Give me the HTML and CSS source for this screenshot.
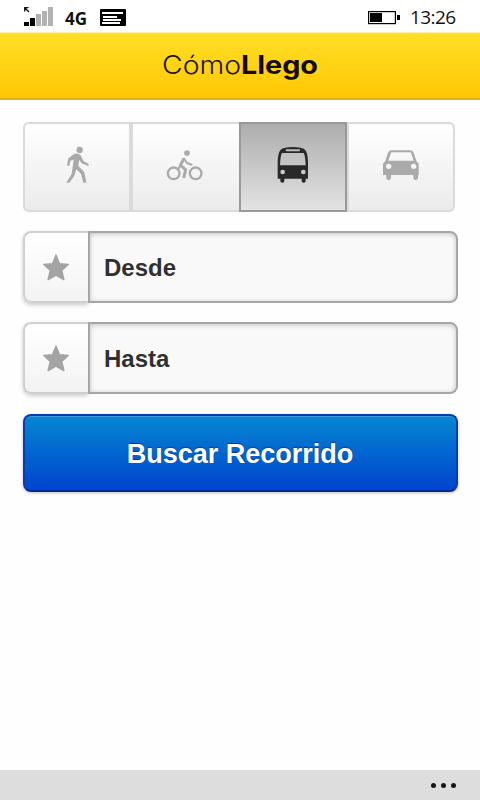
FILE: index.html
```html
<!DOCTYPE html>
<html lang="es">
<head>
<meta charset="utf-8">
<title>CómoLlego</title>
<link rel="stylesheet" href="styles.css">
</head>
<body>
<div class="status">
  <svg class="signal" width="30" height="21" viewBox="0 0 30 21"><path d="M.7 4.500V.7h3.800M1 1l4 4" fill="none" stroke="#111" stroke-width="1.300"/><path d="M0 15h5v4H0zM6 11h5v8H6z" fill="#000"/><path d="M12 7h5v12h-5zM18 4h5v15h-5zM24 0h5v19h-5z" fill="#b2b2b2"/></svg>
  <span class="network">4G</span>
  <svg class="message" width="26" height="18" viewBox="0 0 26 18"><rect width="26" height="17" rx="1" fill="#000"/><path d="M2 3h21v2H2zM3 7h14v2H3zM3 10h18v2H3zM2 13h18v2H2z" fill="#fff"/><path d="M3 9.500h15M3 12.500h17" stroke="#000"/></svg>
  <svg class="battery" width="33" height="14" viewBox="0 0 33 14"><rect x=".6" y=".6" width="26.800" height="12" fill="#fff" stroke="#000" stroke-width="1.200"/><path d="M2 2h12v9H2zM29 4h3v5h-3z"/></svg>
  <span class="clock">13:26</span>
</div>
<header class="header">
  <svg class="logo" width="160" height="36" viewBox="0 0 160 36"><text class="logo-light" x="2" y="26" textLength="79" lengthAdjust="spacingAndGlyphs">Cómo</text><text class="logo-bold" x="81" y="26" textLength="77" lengthAdjust="spacingAndGlyphs">Llego</text></svg>
</header>
<main class="content">
  <nav class="modes">
    <a class="mode"><svg width="108" height="90" viewBox="21 21 324 270"><circle cx="191" cy="105" r="9.500" fill="#a9a9a9"/><path fill="#a9a9a9" d="M175 117Q181 114 188 117Q194 119 196 125L202 138 217 146Q220 150 217 153L197 145 190 134 187 153 202 168Q207 175 211 203H202L195 176 181 163 175 182 160 203H151L167 177 173 134 163 137 160 152H153L157 130Z"/></svg></a>
    <a class="mode"><svg width="108" height="90" viewBox="3 21 324 270"><circle cx="171" cy="114" r="8.500" fill="#aaa"/><g fill="none" stroke="#aaa" stroke-linejoin="round"><circle cx="131" cy="175" r="17.500" stroke-width="7"/><circle cx="197" cy="175" r="17.500" stroke-width="7"/><path d="M162 130L151 151 167 164 161 189" stroke-width="9"/><path d="M161 129L171 144 187 150M150 153L143 165" stroke-width="6"/></g></svg></a>
    <a class="mode active"><svg width="108" height="90" viewBox="21 21 324 270"><path fill="#292929" fill-rule="evenodd" d="M137 191V139Q138 112 146 104Q155 96 182 96Q210 96 219 104Q227 112 228 139V191H221V198Q221 203 215 203T209 198V191H157V198Q157 203 151 203T145 198V191ZM164 103Q161 103 161 106T164 109H201Q204 109 204 106T201 103ZM150 114Q145 122 144 151H221Q220 122 215 114ZM159 171a7 7 0 1 0-14 0a7 7 0 1 0 14 0ZM221 171a7 7 0 1 0-14 0a7 7 0 1 0 14 0Z"/></svg></a>
    <a class="mode"><svg width="108" height="90" viewBox="6 21 324 270"><path fill="#aaa" fill-rule="evenodd" d="M114 180V148Q114 142 120 140L129 113Q132 106 140 106H196Q203 106 206 113L215 140Q221 142 221 148V180H219V188Q219 195 212 195T205 188V180H138V188Q138 195 131 195T124 188V180ZM141 112Q138 112 137 116L130 137H206L199 116Q198 112 194 112ZM139 154a8 8 0 1 0-16 0a8 8 0 1 0 16 0ZM214 154a8 8 0 1 0-16 0a8 8 0 1 0 16 0Z"/></svg></a>
  </nav>
  <div class="field">
    <button class="favorite"><svg width="28" height="29" viewBox="0 0 28 29"><path d="M14 2.200L17.400 10.800 26.200 11.500 19.600 17.300 21.800 26.500 14 22 6.200 26.500 8.400 17.300 1.800 11.500 10.600 10.800Z" fill="#a4a4a4" stroke="#a4a4a4" stroke-width="1.600" stroke-linejoin="round"/></svg></button>
    <div class="input">Desde</div>
  </div>
  <div class="field">
    <button class="favorite"><svg width="28" height="29" viewBox="0 0 28 29"><path d="M14 2.200L17.400 10.800 26.200 11.500 19.600 17.300 21.800 26.500 14 22 6.200 26.500 8.400 17.300 1.800 11.500 10.600 10.800Z" fill="#a4a4a4" stroke="#a4a4a4" stroke-width="1.600" stroke-linejoin="round"/></svg></button>
    <div class="input">Hasta</div>
  </div>
  <button class="search">Buscar Recorrido</button>
</main>
<footer class="appbar"><i></i><i></i><i></i></footer>
</body>
</html>
```
FILE: styles.css
```css
* { box-sizing: border-box; }
body {
  margin: 0;
  height: 800px;
  display: flex;
  flex-direction: column;
  overflow: hidden;
  background: #fefefe;
  font-family: "Liberation Sans", Arial, sans-serif;
}
svg { display: block; flex: none; }
button { padding: 0; font: inherit; }
.status {
  height: 32px;
  display: flex;
  align-items: flex-start;
  padding: 0 24px;
  background: #fff;
  font-family: "Open Sans", "Noto Sans", sans-serif;
  color: #111;
}
.signal { margin-top: 7px; }
.network { width: 34px; margin: 8px 0 0 11px; font-size: 17px; line-height: 22px; font-weight: 700; }
.message { margin: 9px 0 0 1px; }
.battery { margin: 11px 0 0 auto; }
.clock { width: 46px; margin: 5px 0 0 9px; font-size: 19px; line-height: 24px; letter-spacing: -.6px; white-space: nowrap; }
.header {
  height: 68px;
  display: flex;
  justify-content: center;
  padding-top: 15px;
  background: linear-gradient(#ffdf25, #ffc704);
  border-top: 1px solid #fff3a6;
  border-bottom: 2px solid #e5ae1c;
}
.logo { overflow: visible; }
.logo text { font-family: Inter, sans-serif; font-size: 25.500px; fill: #21160a; }
.logo .logo-light { font-weight: 300; }
.logo .logo-bold { font-weight: 700; fill: #130c05; }
.content { flex: 1; padding: 22px 22px 0 23px; }
.modes { display: flex; width: 432px; height: 90px; margin-bottom: 19px; }
.mode {
  width: 108px;
  background: linear-gradient(#fff, #ebebeb);
  box-shadow: inset 0 0 0 2px #dadada;
}
.mode:first-child { border-radius: 6px 0 0 6px; }
.mode:nth-child(2) { box-shadow: inset 0 2px #dadada, inset 0 -2px #dadada, inset 2px 0 #dadada; }
.mode:last-child { border-radius: 0 6px 6px 0; }
.mode.active { background: linear-gradient(#acacac, #e4e4e4); box-shadow: inset 0 0 0 2px #999; }
.field { display: flex; width: 435px; height: 72px; margin-bottom: 19px; }
.favorite {
  width: 65px;
  display: flex;
  align-items: center;
  justify-content: center;
  padding-right: 2px;
  border: 2px solid #cfcfcf;
  border-right: 0;
  border-radius: 8px 0 0 8px;
  background: linear-gradient(#fff, #f3f3f3);
  box-shadow: 0 2px 4px rgba(0, 0, 0, .2);
}
.input {
  flex: 1;
  padding-left: 14px;
  border: 2px solid #a6a6a6;
  border-radius: 0 8px 8px 0;
  background: #f9f9f9;
  box-shadow: inset 0 1px 5px rgba(0, 0, 0, .22);
  color: #303030;
  font-size: 24px;
  line-height: 69px;
  font-weight: 700;
}
.search {
  display: block;
  width: 435px;
  height: 78px;
  padding: 2px 1px 0 0;
  border: 2px solid #063cae;
  border-bottom-color: #002a91;
  border-radius: 8px;
  background: linear-gradient(#0587d1, #0044cf);
  box-shadow: inset 0 1px #4299e1, 0 1px 3px rgba(0, 0, 0, .25);
  color: #fff;
  font-size: 27px;
  font-weight: 700;
  text-shadow: 0 -1px 1px #053a86;
}
.field + .search { margin-top: 20px; }
.appbar {
  height: 30px;
  display: flex;
  align-items: center;
  justify-content: flex-end;
  gap: 5px;
  padding-right: 24px;
  background: #ddd;
}
.appbar i { width: 5px; height: 5px; border-radius: 50%; background: #151515; }
```
